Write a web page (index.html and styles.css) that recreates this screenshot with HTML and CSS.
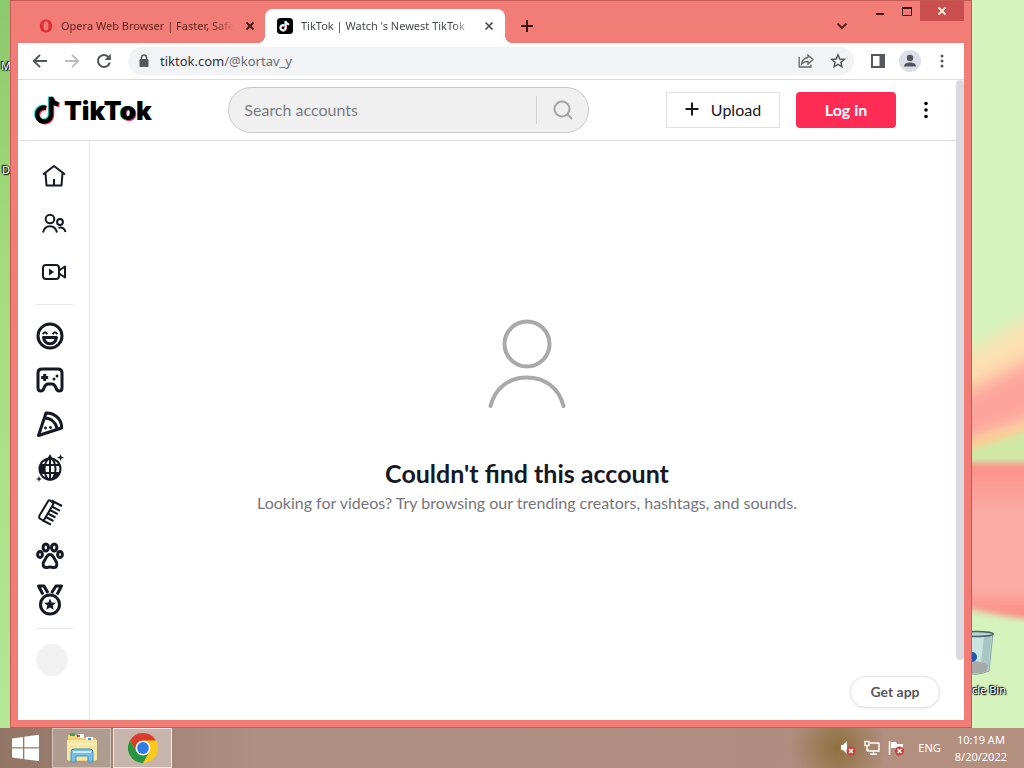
FILE: index.html
```html
<!DOCTYPE html>
<html lang="en">
<head>
<meta charset="utf-8">
<title>TikTok | Watch 's Newest TikTok Videos</title>
<link rel="stylesheet" href="styles.css">
</head>
<body>
<div class="desktop">
  <svg class="wallpaper" viewBox="0 0 1024 768" preserveAspectRatio="none" aria-hidden="true">
    <defs>
      <linearGradient id="leaf" x1="0" y1="0" x2="0" y2="1">
        <stop offset="0" stop-color="#8cc96c"/><stop offset=".35" stop-color="#a4dc7c"/><stop offset="1" stop-color="#b6e898"/>
      </linearGradient>
      <linearGradient id="petal" x1="0" y1="0" x2="0" y2="1">
        <stop offset="0" stop-color="#fd8f88"/><stop offset=".3" stop-color="#fbaaa4"/><stop offset=".8" stop-color="#fcaca5"/><stop offset="1" stop-color="#fb827a"/>
      </linearGradient>
      <filter id="soft" x="-20%" y="-40%" width="140%" height="180%"><feGaussianBlur stdDeviation="9"/></filter>
      <filter id="fine" x="-20%" y="-40%" width="140%" height="180%"><feGaussianBlur stdDeviation="3"/></filter>
    </defs>
    <rect width="1024" height="768" fill="#d5f3bd"/>
    <rect width="500" height="768" fill="url(#leaf)"/>
    <path d="M940 370L1060 300V425L940 450Z" fill="#fde0b0" filter="url(#soft)"/>
    <path d="M940 405L1060 345V410L940 452Z" fill="#fda49c" filter="url(#soft)"/>
    <path d="M940 460L1060 415V470H940Z" fill="#cfe9a4" filter="url(#fine)"/>
    <path d="M940 448L1060 413V419L940 460Z" fill="#fccb94" filter="url(#fine)"/>
    <path d="M940 463H1060V622Q1000 618 940 602Z" fill="url(#petal)" filter="url(#fine)"/>
  </svg>

  <span class="desk-label desk-label-m">M</span>
  <span class="desk-label desk-label-d">D</span>
  <div class="bin">
    <svg width="40" height="48" viewBox="0 0 40 48" aria-hidden="true">
      <path d="M3 4L37 3L33 41Q20 47 8 42Z" fill="#c9e3df" stroke="#85a6a6"/>
      <path d="M28 6L36 4L32 40L24 43Z" fill="#a8c6c4"/>
      <ellipse cx="20" cy="4" rx="17" ry="2.5" fill="#b9d3d1" stroke="#466468" stroke-width="1.5"/>
      <path d="M8 34Q20 28 32 35L31 41Q20 46 9 41Z" fill="#a7aaa8"/>
      <circle cx="16" cy="27" r="5" fill="#2458b5"/>
    </svg>
    <span class="desk-label">cle Bin</span>
  </div>

  <div class="window">
    <div class="titlebar">
      <div class="tabs">
        <div class="tab">
          <svg width="14" height="14" viewBox="0 0 14 14" aria-hidden="true"><path fill-rule="evenodd" fill="#e0303a" d="M7 .5C3.200 .5 .8 3.300 .8 7S3.200 13.500 7 13.500 13.200 10.700 13.200 7 10.800 .5 7 .5ZM7 2.500C8.700 2.500 9.500 4.500 9.500 7S8.700 11.500 7 11.500 4.500 9.500 4.500 7 5.300 2.500 7 2.500Z"/></svg>
          <span class="tab-title">Opera Web Browser | Faster, Safe</span>
          <button class="icon-btn" aria-label="Close tab"><svg width="10" height="10" viewBox="0 0 10 10"><path d="M1.500 1.500L8.500 8.500M8.500 1.500L1.500 8.500" stroke="#4a1714" stroke-width="1.800"/></svg></button>
        </div>
        <div class="tab tab-active">
          <svg width="16" height="16" viewBox="0 0 16 16" aria-hidden="true"><rect width="16" height="16" rx="3.500"/><g fill="none" stroke-width="1.800"><path d="M7 7.300A2.600 2.600 0 1 0 8.300 10V3Q8.700 5.700 11.600 6" stroke="#25f4ee"/><path d="M7.800 8A2.600 2.600 0 1 0 9.100 10.500V3.500Q9.500 6.200 12.300 6.500" stroke="#fe2c55"/><path d="M7.400 7.600A2.600 2.600 0 1 0 8.700 10.300V3.200Q9.100 6 12 6.300" stroke="#fff"/></g></svg>
          <span class="tab-title">TikTok | Watch 's Newest TikTok</span>
          <button class="icon-btn" aria-label="Close tab"><svg width="10" height="10" viewBox="0 0 10 10"><path d="M1.500 1.500L8.500 8.500M8.500 1.500L1.500 8.500" stroke="#45484b" stroke-width="1.600"/></svg></button>
        </div>
        <button class="icon-btn new-tab" aria-label="New tab"><svg width="14" height="14" viewBox="0 0 14 14"><path d="M7 1V13M1 7H13" stroke="#3d1412" stroke-width="2"/></svg></button>
      </div>
      <button class="icon-btn tab-search" aria-label="Search tabs"><svg width="12" height="8" viewBox="0 0 12 8"><path d="M1.500 1.500L6 6L10.500 1.500" fill="none" stroke="#5e1d19" stroke-width="2"/></svg></button>
      <div class="controls">
        <button class="control" aria-label="Minimize"><svg width="10" height="12" viewBox="0 0 10 12"><path d="M1 9H9" stroke="#3d1412" stroke-width="2"/></svg></button>
        <button class="control" aria-label="Maximize"><svg width="10" height="12" viewBox="0 0 10 12"><path d="M.5 3V10.500H9.500V3" fill="none" stroke="#3d1412"/><path d="M0 3H10" stroke="#3d1412" stroke-width="2"/></svg></button>
        <button class="control control-close" aria-label="Close"><svg width="10" height="10" viewBox="0 0 10 10"><path d="M1.500 1.500L8.500 8.500M8.500 1.500L1.500 8.500" stroke="#fff0dc" stroke-width="1.800"/></svg></button>
      </div>
    </div>

    <div class="toolbar">
      <button class="icon-btn" aria-label="Back"><svg width="16" height="16" viewBox="0 0 16 16"><path d="M15 8H2.500M8 1.800L1.800 8L8 14.200" fill="none" stroke="#505357" stroke-width="1.900"/></svg></button>
      <button class="icon-btn" aria-label="Forward"><svg width="16" height="16" viewBox="0 0 16 16"><path d="M1 8H13.500M8 1.800L14.200 8L8 14.200" fill="none" stroke="#bcbcbc" stroke-width="1.900"/></svg></button>
      <button class="icon-btn" aria-label="Reload"><svg width="16" height="16" viewBox="0 0 16 16"><path d="M13.800 9.500A6 6 0 1 1 12.600 4.100" fill="none" stroke="#505357" stroke-width="2"/><path d="M14.800 .8V7H8.600Z" fill="#505357"/></svg></button>
      <div class="omnibox">
        <svg width="10" height="14" viewBox="0 0 10 14" aria-hidden="true"><rect x=".5" y="5" width="9" height="8" rx="1" fill="#55585c"/><path d="M2.500 6V3.500A2.500 2.500 0 0 1 7.500 3.500V6" fill="none" stroke="#55585c" stroke-width="1.500"/></svg>
        <span class="url"><span class="domain">tiktok.com</span>/@kortav_y</span>
        <button class="icon-btn" aria-label="Share"><svg width="16" height="16" viewBox="0 0 16 16"><g fill="none" stroke="#65686b" stroke-width="1.300"><path d="M1.200 4V14H13V11.500"/><path d="M10 2L15 6.500L10 11V8.500C7 8.400 5 9.300 3.500 11C4 7.500 6.300 5 10 4.500Z"/></g></svg></button>
        <button class="icon-btn" aria-label="Bookmark"><svg width="16" height="16" viewBox="0 0 16 16"><path d="M8 1.800L9.800 6L14.300 6.400L10.900 9.300L11.900 13.800L8 11.400L4.100 13.800L5.100 9.300L1.700 6.400L6.200 6Z" fill="none" stroke="#55585c" stroke-width="1.500"/></svg></button>
      </div>
      <button class="icon-btn" aria-label="Side panel"><svg width="16" height="16" viewBox="0 0 16 16"><path fill="#55585c" fill-rule="evenodd" d="M1 1H15V15H1ZM3 3V13H9.500V3Z"/></svg></button>
      <button class="icon-btn profile" aria-label="Profile"><svg width="14" height="14" viewBox="0 0 14 14"><circle cx="7" cy="4" r="3.200" fill="#50545c"/><path d="M1 12.500Q1 8.500 7 8.500T13 12.500Z" fill="#50545c"/></svg></button>
      <button class="icon-btn" aria-label="Menu"><svg width="4" height="14" viewBox="0 0 4 14" fill="#55585c"><circle cx="2" cy="2" r="1.500"/><circle cx="2" cy="7" r="1.500"/><circle cx="2" cy="12" r="1.500"/></svg></button>
    </div>

    <div class="page">
      <header class="header">
        <a class="logo" href="#" aria-label="TikTok home">
          <svg width="28" height="32" viewBox="0 0 28 32" aria-hidden="true"><g fill="none" stroke-width="4.500"><path d="M11 13A7 7 0 1 0 16 20V2.500Q17 8.500 23.500 9.500" stroke="#25f4ee"/><path d="M12.500 14.500A7 7 0 1 0 18 21.500V4Q19 10 25.500 11" stroke="#fe2c55"/><path d="M12 13.800A7 7 0 1 0 17 20.800V3Q18 9.500 24.500 10.300" stroke="#000"/></g></svg>
          <span class="wordmark">TikT<span class="wordmark-o">o</span>k</span>
        </a>
        <form class="search">
          <input class="search-input" type="text" placeholder="Search accounts" aria-label="Search accounts">
          <button class="search-btn" type="button" aria-label="Search"><svg width="24" height="24" viewBox="0 0 24 24"><g fill="none" stroke="#a5a5a7" stroke-width="2" stroke-linecap="round"><circle cx="11" cy="11" r="7.500"/><path d="M16.500 16.500L20.500 20.500"/></g></svg></button>
        </form>
        <div class="actions">
          <button class="upload"><svg width="14" height="14" viewBox="0 0 14 14" aria-hidden="true"><path d="M7 .5V13.500M.5 7H13.500" stroke="#161823" stroke-width="2"/></svg>Upload</button>
          <button class="login">Log in</button>
          <button class="icon-btn more" aria-label="More"><svg width="4" height="18" viewBox="0 0 4 18"><circle cx="2" cy="2.500" r="1.800"/><circle cx="2" cy="9" r="1.800"/><circle cx="2" cy="15.500" r="1.800"/></svg></button>
        </div>
      </header>

      <div class="body">
        <nav class="sidebar">
          <div class="nav-main">
            <a href="#" aria-label="Home"><svg width="28" height="28" viewBox="0 0 28 28"><path d="M3 12.500L14 4L25 12.500M5.500 11L6.500 23.500H21.500L22.500 11M14 17V23" class="line"/></svg></a>
            <a href="#" aria-label="Following"><svg width="28" height="28" viewBox="0 0 28 28"><g class="line"><circle cx="10" cy="9" r="4.300"/><circle cx="20" cy="12" r="2.900"/><path d="M3 22.500C4 18 7 16.200 10 16.200S16 18 17 22.500M18.500 17.800C22 17 24.500 18.500 25.500 22"/></g></svg></a>
            <a href="#" aria-label="Live"><svg width="28" height="28" viewBox="0 0 28 28"><rect x="3" y="7" width="16" height="14" rx="3" class="line"/><path d="M19 12.500L25 8.500V19.500L19 15.500" class="line"/><path d="M9 10.500L14 14L9 17.500Z"/></svg></a>
          </div>
          <hr>
          <div class="nav-topics">
            <a href="#" aria-label="Comedy"><svg width="28" height="28" viewBox="0 0 28 28"><circle cx="14" cy="14" r="12" class="line bold"/><path d="M6.800 12.300Q9 8.300 11.200 12.300M16.800 12.300Q19 8.300 21.200 12.300" class="line"/><path d="M7.500 15.500H20.500Q19.500 21.700 14 21.700T7.500 15.500Z" class="line bold"/></svg></a>
            <a href="#" aria-label="Gaming"><svg width="28" height="28" viewBox="0 0 28 28"><path d="M6 3H22Q26 3 26 7V22Q26 25 23 25Q21 25 20 22Q18.500 18 16 18H12Q9.500 18 8 22Q7 25 5 25Q2 25 2 22V7Q2 3 6 3Z" class="line bold"/><path d="M8.700 8V15M5.200 11.500H12.200" class="line bold"/><circle cx="18" cy="13" r="1.500"/><circle cx="21" cy="10" r="1.500"/></svg></a>
            <a href="#" aria-label="Food"><svg width="28" height="28" viewBox="0 0 28 28"><path d="M2.500 25.500L10 3C18 2.500 26 9 25.700 18Z" class="line bold"/><path d="M9 8C15 8 20.500 13 21 19" class="line bold"/><circle cx="9.500" cy="18" r="1.400"/><circle cx="14.500" cy="17.500" r="1.400"/></svg></a>
            <a href="#" aria-label="Dance"><svg width="28" height="28" viewBox="0 0 28 28"><circle cx="14" cy="15" r="10.500" class="line"/><path d="M14 4.500V25.500M4 11H24M4 19H24" class="line"/><ellipse cx="14" cy="15" rx="5.500" ry="10.500" class="line"/><path d="M3.500 11.500H8.500V18.500H4ZM19.500 18.500H24L21 23L16 25.500ZM11.500 4.500L14 0L16.500 4.500Z"/><path d="M24.500 0L25.400 2.600L28 3.500L25.400 4.400L24.500 7L23.600 4.400L21 3.500L23.600 2.600ZM3 22L3.800 24.200L6 25L3.800 25.800L3 28L2.200 25.800L0 25L2.200 24.200Z"/></svg></a>
            <a href="#" aria-label="Beauty"><svg width="28" height="28" viewBox="0 0 28 28"><g class="line"><path d="M12.500 2.500L3.500 17.500Q2.500 20 4.500 21L7.500 22.700L17.700 5.500L14.800 3Q13.500 1.800 12.500 2.500Z"/><path d="M15.500 2.500L26 8M15.800 8.500L24 12.800M13.800 12L21.800 16.200M11.800 15.500L19.500 19.500M9.800 19L17.500 23M7 22.500L15 26.700"/></g></svg></a>
            <a href="#" aria-label="Animals"><svg width="28" height="28" viewBox="0 0 28 28"><g class="line bold"><ellipse cx="9.800" cy="5.500" rx="2.700" ry="3.500"/><ellipse cx="18.200" cy="5.500" rx="2.700" ry="3.500"/><ellipse cx="4" cy="12.500" rx="2.400" ry="3"/><ellipse cx="24" cy="12.500" rx="2.400" ry="3"/><path d="M14 12.500C10.500 12.500 10.500 16 8.500 18.500C6 21.500 7 25.500 10 25.500C12 25.500 12.500 25 14 25S16 25.500 18 25.500C21 25.500 22 21.500 19.500 18.500C17.500 16 17.500 12.500 14 12.500Z"/></g></svg></a>
            <a href="#" aria-label="Sports"><svg width="28" height="32" viewBox="0 0 28 32"><g class="line bold"><circle cx="14" cy="20.500" r="9.500"/><path d="M7 10.500L2.500 2H8L12 9M21 10.500L25.500 2H20L15.500 9"/></g><path d="M14 14.500L15.700 18.500L20 18.800L16.700 21.600L17.700 25.700L14 23.500L10.300 25.700L11.300 21.600L8 18.800L12.300 18.500Z"/></svg></a>
          </div>
          <hr>
          <span class="avatar-skeleton"></span>
        </nav>
        <main class="main">
          <svg width="80" height="90" viewBox="0 0 80 90" aria-hidden="true"><g fill="none" stroke="#a9a9ab" stroke-width="4" stroke-linecap="round"><circle cx="40" cy="25" r="22.500"/><path d="M3.500 87C8 69 22 58.500 40 58.500S72 69 76.500 87"/></g></svg>
          <h1>Couldn't find this account</h1>
          <p>Looking for videos? Try browsing our trending creators, hashtags, and sounds.</p>
        </main>
      </div>
      <div class="scroll-thumb"></div>
      <button class="get-app">Get app</button>
    </div>
  </div>

  <div class="taskbar">
    <button class="start" aria-label="Start"><svg width="28" height="28" viewBox="0 0 28 28" fill="#fff"><path d="M0 4.500L11 3V13.300H0ZM12.300 2.800L27 .8V13.300H12.300ZM0 14.600H11V25L0 23.500ZM12.300 14.600H27V27L12.300 25.200Z"/></svg></button>
    <button class="task" aria-label="File Explorer"><svg width="32" height="32" viewBox="0 0 32 32"><path d="M2 3H10L12 6H30V29H2Z" fill="#ecd279"/><path d="M4 1H9V4H4Z" fill="#42a35b"/><path d="M12 2H18V6H12Z" fill="#fff"/><path d="M11 3H14V5H11Z" fill="#cf4a38"/><path d="M20 5H27V8H20Z" fill="#fff"/><path d="M22 6H25V8H22Z" fill="#3a91d3"/><path d="M1 8H31V28H1Z" fill="#f7e6a1"/><path d="M1 12H31" stroke="#fff3c4"/><path d="M5 30V20Q5 17 8 17H24Q27 17 27 20V30H22V24H10V30Z" fill="#79bfe8" stroke="#3b8fc9"/><path d="M7 20H25" stroke="#c9ecff" stroke-width="2"/></svg></button>
    <button class="task task-active" aria-label="Google Chrome"><svg width="30" height="30" viewBox="0 0 30 30"><circle cx="15" cy="15" r="15" fill="#fbc91b"/><path d="M2 7.500A15 15 0 0 1 28 7.500H15A7.500 7.500 0 0 0 8.500 18.700Z" fill="#dd3b2f"/><path d="M2 7.500A15 15 0 0 0 15 30L21.500 18.700A7.500 7.500 0 0 1 8.500 18.700Z" fill="#289544"/><circle cx="15" cy="15" r="7.300" fill="#fff"/><circle cx="15" cy="15" r="5.900" fill="#2f7de4"/></svg></button>
    <div class="tray">
      <svg width="16" height="16" viewBox="0 0 16 16" aria-hidden="true"><path d="M1 5H3L7 1V14L3 10H1Z" fill="#fff"/><circle cx="11" cy="11" r="4.500" fill="#c9413d"/><path d="M9 9L13 13M13 9L9 13" stroke="#fff" stroke-width="1.500"/></svg>
      <svg width="16" height="16" viewBox="0 0 16 16" aria-hidden="true"><g fill="none" stroke="#fff" stroke-width="1.400"><path d="M6 3H15V11H4V9M9.500 11V14M6 14.300H13M3 6V11"/><rect x="1" y="1.500" width="4" height="4"/></g></svg>
      <svg width="16" height="16" viewBox="0 0 16 16" aria-hidden="true"><path d="M1.500 1V15" stroke="#fff" stroke-width="1.500"/><path d="M3 2H8L9 4H15V9H9L8 8H3Z" fill="#fff"/><circle cx="11.500" cy="11" r="4.500" fill="#c9413d"/><path d="M9.500 9L13.500 13M13.500 9L9.500 13" stroke="#fff" stroke-width="1.500"/></svg>
      <span class="lang">ENG</span>
      <div class="clock"><span>10:19 AM</span><span>8/20/2022</span></div>
    </div>
  </div>
</div>
</body>
</html>
```
FILE: styles.css
```css
* { box-sizing: border-box; }
body { margin: 0; font-family: "Noto Sans", sans-serif; font-size: 11px; }
button { padding: 0; border: 0; background: none; font: inherit; color: inherit; cursor: pointer; }
svg { display: block; flex: none; }
a { color: inherit; text-decoration: none; }

.desktop { position: relative; display: flex; flex-direction: column; height: 100vh; overflow: hidden; }
.wallpaper { position: absolute; inset: 0; width: 100%; height: 100%; }
.desk-label { color: #fff; line-height: 16px; text-shadow: 0 0 2px #000, 1px 1px 1px #000, -1px -1px 1px #000; white-space: nowrap; }
.desk-label-m { position: absolute; left: 1px; top: 58px; }
.desk-label-d { position: absolute; left: 2px; top: 162px; }
.bin { position: absolute; right: 18px; bottom: 70px; display: flex; flex-direction: column; align-items: flex-end; gap: 4px; }
.bin svg { margin-right: 10px; }

/* Browser window */
.window { position: relative; flex: 1; min-height: 0; display: flex; flex-direction: column; margin: 0 52px 0 10px; padding: 0 7px 7px; background: #f27d77; border: 1px solid #c65a54; }
.titlebar { display: flex; align-items: flex-end; height: 42px; flex: none; color: #5c1f1b; }
.icon-btn { display: grid; place-items: center; flex: none; min-width: 16px; height: 16px; }
.tabs { display: flex; align-items: flex-end; flex: 1; min-width: 0; padding-left: 7px; }
.tab { display: flex; align-items: center; gap: 8px; width: 240px; height: 34px; padding: 0 7px 0 14px; }
.tab-title { flex: 1; overflow: hidden; white-space: nowrap; line-height: 20px; mask-image: linear-gradient(90deg, #000 calc(100% - 20px), transparent); }
.tab-active { position: relative; padding: 0 8px 0 12px; color: #45484b; background: #fff; border-radius: 8px 8px 0 0; }
.tab-active::before, .tab-active::after { content: ""; position: absolute; bottom: 0; width: 8px; height: 8px; }
.tab-active::before { left: -8px; background: radial-gradient(circle at 0 0, transparent 8px, #fff 8px); }
.tab-active::after { right: -8px; background: radial-gradient(circle at 100% 0, transparent 8px, #fff 8px); }
.new-tab { margin-left: 14px; align-self: center; }
.tab-search { margin: 0 16px 9px 0; }
.controls { display: flex; align-self: flex-start; }
.control { display: grid; place-items: center; width: 27px; height: 20px; }
.control-close { width: 44px; background: #c94f4f; }

.toolbar { display: flex; align-items: center; gap: 16px; height: 37px; flex: none; padding: 0 14px; background: #fff; border-bottom: 1px solid #dadce0; }
.omnibox { display: flex; align-items: center; gap: 16px; flex: 1; min-width: 0; height: 28px; padding: 0 8px 0 11px; background: #f1f3f4; border-radius: 14px; }
.url { flex: 1; margin-left: -5px; color: #696c70; font-size: 13px; line-height: 20px; }
.domain { color: #303236; }
.profile { width: 22px; height: 22px; margin: 0 -3px; border-radius: 50%; background: #dcdfe8; }

/* Page */
.page { position: relative; flex: 1; min-height: 0; display: flex; flex-direction: column; background: #fff; color: #161823; font-family: Lato, sans-serif; font-size: 16px; }
.header { display: flex; align-items: center; justify-content: space-between; height: 61px; flex: none; padding: 0 24px 0 16px; border-bottom: 1px solid #e0e0e1; }
.logo { display: flex; align-items: center; gap: 2px; color: #000; }
.wordmark { font-family: Inter, sans-serif; font-weight: 900; font-size: 26px; line-height: 32px; padding-top: 2px; }
.wordmark-o { text-shadow: -1px 0 #25f4ee, 1px 1px #fe2c55; }
.search { display: flex; align-items: center; width: 361px; height: 46px; background: #f0f0f1; border: 1px solid #c9c9cb; border-radius: 23px; }
.search-input { flex: 1; min-width: 0; padding: 0 15px 2px; border: 0; outline: 0; background: none; font: inherit; color: #161823; }
.search-input::placeholder { color: #7b7c80; opacity: 1; }
.search-btn { display: grid; place-items: center; width: 52px; height: 28px; border-left: 1px solid #d2d2d4; }
.actions { display: flex; align-items: center; gap: 16px; }
.upload { display: flex; align-items: center; justify-content: center; gap: 12px; width: 114px; height: 36px; padding-bottom: 2px; border: 1px solid #e2e2e3; }
.login { width: 100px; height: 36px; padding-bottom: 2px; border-radius: 4px; background: #fe2c55; color: #fff; font-weight: 700; }
.more { width: 28px; height: 28px; }

.body { display: flex; flex: 1; min-height: 0; }
.sidebar { width: 72px; flex: none; padding: 11px 16px 0; border-right: 1px solid #e5e5e6; }
.sidebar svg { fill: #161823; }
.sidebar .line { fill: none; stroke: #161823; stroke-width: 2; stroke-linejoin: round; }
.sidebar .bold { stroke-width: 3; }
.sidebar a { display: grid; place-items: center; }
.nav-main a { width: 40px; height: 48px; }
.nav-topics a { width: 32px; height: 44px; }
.sidebar hr { height: 1px; margin: 8px 0 9px 2px; border: 0; background: #e6e6e7; }
.sidebar .nav-topics + hr { margin: 6px 0 15px 2px; }
.avatar-skeleton { display: block; width: 32px; height: 32px; margin-left: 2px; border-radius: 50%; background: #f1f1f2; }

.main { flex: 1; display: flex; flex-direction: column; align-items: center; justify-content: center; padding-bottom: 28px; text-align: center; }
.main h1 { margin: 48px 0 0; font-size: 25px; line-height: 32px; font-weight: 700; }
.main p { margin: 2px 0 0; line-height: 24px; color: #75767b; }
.scroll-thumb { position: absolute; top: 0; right: 0; bottom: 60px; width: 8px; background: #d8dadd; border-radius: 4px; }
.get-app { position: absolute; right: 24px; bottom: 12px; width: 90px; height: 32px; padding-bottom: 2px; border: 1px solid #e4e4e5; border-radius: 16px; background: #fff; box-shadow: 0 1px 3px rgba(0, 0, 0, .08); color: #56575d; font-size: 14px; font-weight: 700; }

/* Taskbar */
.taskbar { position: relative; display: flex; align-items: center; height: 40px; flex: none; color: #fff; background: radial-gradient(ellipse 48px 50px at 838px 20px, #8f7040, transparent), linear-gradient(90deg, #927565, #ad8f84 25%, #b08c80 75%, #b4917f); }
.start { display: grid; place-items: center; width: 52px; height: 40px; }
.task { display: grid; place-items: center; width: 59px; height: 40px; margin-right: 2px; border: 1px solid #d2c3ba; background: #b09b8f; }
.task-active { border-color: #f0e8e4; background: #c7b5ad; }
.tray { display: flex; align-items: center; gap: 8px; margin-left: auto; padding-right: 17px; }
.lang { margin: 0 6px; line-height: 16px; }
.clock { display: flex; flex-direction: column; align-items: center; line-height: 17px; }
```
